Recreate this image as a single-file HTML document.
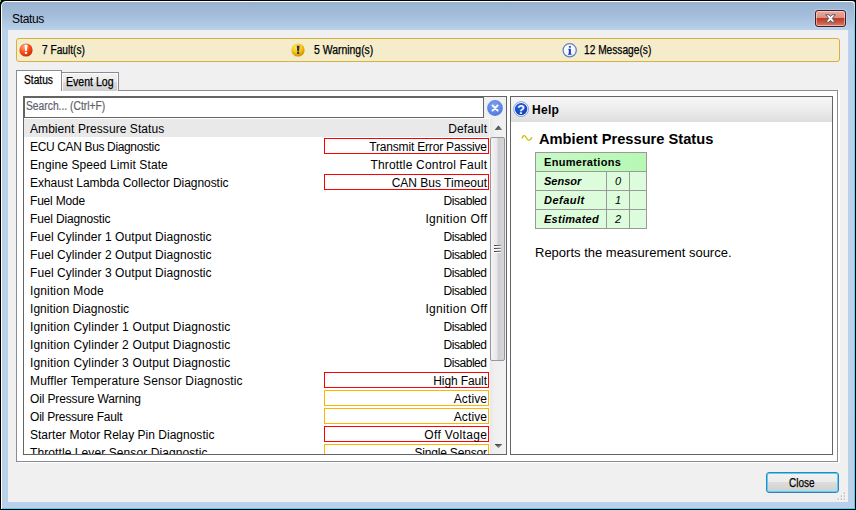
<!DOCTYPE html>
<html><head><meta charset="utf-8">
<style>
*{box-sizing:border-box;margin:0;padding:0}
html,body{width:856px;height:510px;overflow:hidden;background:#000}
body{font-family:"Liberation Sans",sans-serif;font-size:12px;color:#000;position:relative}
.abs{position:absolute}
#frame{left:0;top:0;width:856px;height:510px;background:#000}
#frameW{left:1px;top:1px;width:854px;height:508px;background:#fff;border-radius:5px 3px 0 0}
#frameB{left:2px;top:2px;width:852px;height:506px;border-radius:4px 3px 0 0;
 background:linear-gradient(#98b3d0 0px,#a4bedb 14px,#b9d1ea 28px,#b9d1ea 100%)}
#cyR{left:854px;top:3px;width:1px;height:506px;background:linear-gradient(#a8e6f8 0,#5dd8fa 25px,#3fd8f7 100%)}
#cyB{left:2px;top:508px;width:853px;height:1px;background:#3fd8f7}
#green{left:0;top:0;width:1px;height:2px;background:#30f030}
#content{left:8px;top:30px;width:840px;height:472px;background:#f0f0f0}
#title{left:12px;top:12px;font-size:12px;line-height:14px;color:#000;letter-spacing:-0.35px}
/* close X */
#xbtn{left:815px;top:10px;width:31px;height:17px;border:1px solid #4a1a22;border-radius:3px;
 background:linear-gradient(#e9aa9d 0,#dd8d7f 48%,#bf3c22 50%,#c95038 70%,#d67e6a 100%);box-shadow:inset 0 0 0 1px rgba(255,255,255,.45),0 0 0 1px rgba(190,220,245,.55)}
/* info bar */
#bar{left:16px;top:38px;width:824px;height:24px;background:#f4eccb;border:1px solid #d6b23c;border-radius:3px}
.bt{-webkit-text-stroke:0.25px #000;font-size:12px;line-height:14px;top:43px;white-space:pre;transform-origin:0 0}
/* tabs */
#page{left:16px;top:90px;width:822px;height:372px;background:#fff;border:1px solid #898c95;box-shadow:2px 1px 0 #fff}
#tab1{left:16px;top:70px;width:46px;height:21px;background:#fff;border:1px solid #898c95;border-bottom:none}
#tab2{left:61px;top:72px;width:58px;height:19px;border:1px solid #898c95;border-bottom:none;box-shadow:inset 1px 1px 0 rgba(255,255,255,.75),inset -1px 0 0 rgba(255,255,255,.75);background:linear-gradient(#f2f2f2 0,#ebebeb 50%,#dddddd 50%,#cfcfcf 100%)}
.tt{-webkit-text-stroke:0.25px #000;font-size:12px;line-height:14px;white-space:pre;transform-origin:0 0}
/* left panel */
#lp{left:23px;top:96px;width:484px;height:359px;border:1px solid #646464;background:#f0f0f0;overflow:hidden}
#search{left:24px;top:97px;width:460px;height:21px;border:1px solid #646464;background:#fff}
#stext{left:26px;top:99px;font-size:12px;line-height:14px;color:#62626e;-webkit-text-stroke:0.2px #62626e;white-space:pre;transform-origin:0 0;transform:scaleX(.858)}
#list{left:24px;top:118px;width:465px;height:336px;background:#fff;overflow:hidden}
.row{position:absolute;left:0;width:465px;height:18px}
.row .l{position:absolute;left:6px;top:3px;line-height:14px;white-space:pre}
.row .v{position:absolute;left:300px;top:1px;width:165px;height:16px;line-height:14px;padding-top:1px;text-align:right;padding-right:1px;white-space:pre;border:1px solid transparent}
.row .v b{font-weight:normal;display:inline-block}
.row .v.f{border-color:#f00}
.row .v.w{border-color:#ffb400}
.row.sel{background:#e9e9e9}
#sb{left:489px;top:119px;width:17px;height:335px;background:linear-gradient(90deg,#f8f8f8 0,#f8f8f8 1px,#e8e8e8 1px,#efefef 5px,#f2f2f2 100%)}
#thumb{left:490px;top:137px;width:15px;height:224px;border:1px solid #979797;border-radius:2px;background:linear-gradient(90deg,#f4f4f4 0,#e8e8ea 45%,#cfcfd3 55%,#d6d6da 100%)}
/* right panel */
#rp{left:510px;top:96px;width:323px;height:359px;border:1px solid #646464;background:#fff}
#hh{left:511px;top:97px;width:321px;height:25px;background:linear-gradient(#f7f7f7 0,#ececec 50%,#dedede 100%)}
#help{left:532px;top:103px;font-size:12px;font-weight:bold;line-height:14px;letter-spacing:0.3px}
#h1{left:539px;top:131px;font-size:14.67px;font-weight:bold;line-height:17px;white-space:pre}
#tbl{left:535px;top:152px;width:112px;height:77px;background:#9a9a9a}
.c{position:absolute;background:#dcfcdc;font-size:11px;font-weight:bold;line-height:13px;white-space:pre}
.c i{font-style:italic}
#desc{left:535px;top:245px;font-size:13px;line-height:15px;white-space:pre}
/* close button */
#close{left:766px;top:472px;width:73px;height:21px;border:1px solid #3c7fb1;border-radius:3px;
 background:linear-gradient(#f2f2f2 0,#ebebeb 48%,#dddddd 50%,#cfcfcf 100%);box-shadow:inset 0 0 0 1px #48d8fb;
 }
#closet{-webkit-text-stroke:0.25px #000;left:788.7px;top:476px;font-size:12px;line-height:14px;transform-origin:0 0;transform:scaleX(.831)}
</style></head><body>
<div class="abs" id="frame"></div>
<div class="abs" id="frameW"></div>
<div class="abs" id="frameB"></div>
<div class="abs" id="cyR"></div>
<div class="abs" id="cyB"></div>
<div class="abs" id="green"></div>
<div class="abs" id="title">Status</div>
<div class="abs" id="xbtn"></div>
<div class="abs" id="content"></div>
<div class="abs" id="bar"></div>
<div class="abs bt" style="left:42px;transform:scaleX(.846)">7 Fault(s)</div>
<div class="abs bt" style="left:314px;transform:scaleX(.869)">5 Warning(s)</div>
<div class="abs bt" style="left:584px;transform:scaleX(.848)">12 Message(s)</div>
<div class="abs" id="page"></div>
<div class="abs" id="tab2"></div>
<div class="abs" id="tab1"></div>
<div class="abs tt" style="left:24px;top:73px;transform:scaleX(.852)">Status</div>
<div class="abs tt" style="left:66px;top:75px;transform:scaleX(.879)">Event Log</div>
<div class="abs" id="lp"></div>
<div class="abs" id="search"></div>
<div class="abs" id="stext">Search... (Ctrl+F)</div>
<div class="abs" id="list">
<div class="row sel" style="top:1px"><span class="l" style="letter-spacing:0.067px">Ambient Pressure Status</span><span class="v"><b style="letter-spacing:0.111px;margin-right:-0.111px">Default</b></span></div>
<div class="row" style="top:19px"><span class="l" style="letter-spacing:-0.357px">ECU CAN Bus Diagnostic</span><span class="v f"><b style="letter-spacing:-0.185px;margin-right:0.185px">Transmit Error Passive</b></span></div>
<div class="row" style="top:37px"><span class="l" style="letter-spacing:0.103px">Engine Speed Limit State</span><span class="v"><b style="letter-spacing:0.185px;margin-right:-0.185px">Throttle Control Fault</b></span></div>
<div class="row" style="top:55px"><span class="l" style="letter-spacing:-0.047px">Exhaust Lambda Collector Diagnostic</span><span class="v f"><b style="letter-spacing:0.000px;margin-right:-0.000px">CAN Bus Timeout</b></span></div>
<div class="row" style="top:73px"><span class="l" style="letter-spacing:-0.200px">Fuel Mode</span><span class="v"><b style="letter-spacing:-0.458px;margin-right:0.458px">Disabled</b></span></div>
<div class="row" style="top:91px"><span class="l" style="letter-spacing:-0.158px">Fuel Diagnostic</span><span class="v"><b style="letter-spacing:0.343px;margin-right:-0.343px">Ignition Off</b></span></div>
<div class="row" style="top:109px"><span class="l" style="letter-spacing:0.068px">Fuel Cylinder 1 Output Diagnostic</span><span class="v"><b style="letter-spacing:-0.458px;margin-right:0.458px">Disabled</b></span></div>
<div class="row" style="top:127px"><span class="l" style="letter-spacing:0.068px">Fuel Cylinder 2 Output Diagnostic</span><span class="v"><b style="letter-spacing:-0.458px;margin-right:0.458px">Disabled</b></span></div>
<div class="row" style="top:145px"><span class="l" style="letter-spacing:0.068px">Fuel Cylinder 3 Output Diagnostic</span><span class="v"><b style="letter-spacing:-0.458px;margin-right:0.458px">Disabled</b></span></div>
<div class="row" style="top:163px"><span class="l" style="letter-spacing:0.138px">Ignition Mode</span><span class="v"><b style="letter-spacing:-0.458px;margin-right:0.458px">Disabled</b></span></div>
<div class="row" style="top:181px"><span class="l" style="letter-spacing:0.058px">Ignition Diagnostic</span><span class="v"><b style="letter-spacing:0.343px;margin-right:-0.343px">Ignition Off</b></span></div>
<div class="row" style="top:199px"><span class="l" style="letter-spacing:0.151px">Ignition Cylinder 1 Output Diagnostic</span><span class="v"><b style="letter-spacing:-0.458px;margin-right:0.458px">Disabled</b></span></div>
<div class="row" style="top:217px"><span class="l" style="letter-spacing:0.151px">Ignition Cylinder 2 Output Diagnostic</span><span class="v"><b style="letter-spacing:-0.458px;margin-right:0.458px">Disabled</b></span></div>
<div class="row" style="top:235px"><span class="l" style="letter-spacing:0.151px">Ignition Cylinder 3 Output Diagnostic</span><span class="v"><b style="letter-spacing:-0.458px;margin-right:0.458px">Disabled</b></span></div>
<div class="row" style="top:253px"><span class="l" style="letter-spacing:0.137px">Muffler Temperature Sensor Diagnostic</span><span class="v f"><b style="letter-spacing:-0.111px;margin-right:0.111px">High Fault</b></span></div>
<div class="row" style="top:271px"><span class="l" style="letter-spacing:-0.137px">Oil Pressure Warning</span><span class="v w"><b style="letter-spacing:0.122px;margin-right:-0.122px">Active</b></span></div>
<div class="row" style="top:289px"><span class="l" style="letter-spacing:-0.208px">Oil Pressure Fault</span><span class="v w"><b style="letter-spacing:0.122px;margin-right:-0.122px">Active</b></span></div>
<div class="row" style="top:307px"><span class="l" style="letter-spacing:0.010px">Starter Motor Relay Pin Diagnostic</span><span class="v f"><b style="letter-spacing:0.354px;margin-right:-0.354px">Off Voltage</b></span></div>
<div class="row" style="top:325px"><span class="l" style="letter-spacing:0.089px">Throttle Lever Sensor Diagnostic</span><span class="v w"><b style="letter-spacing:-0.177px;margin-right:0.177px">Single Sensor</b></span></div>
</div>
<div class="abs" id="sb"></div>
<div class="abs" id="thumb"></div>
<div class="abs" id="rp"></div>
<div class="abs" id="hh"></div>
<div class="abs" id="help">Help</div>
<div class="abs" id="h1">Ambient Pressure Status</div>
<div class="abs" id="tbl">
<div class="c" style="left:1px;top:1px;width:110px;height:18px;padding:3px 0 0 8px;background:linear-gradient(90deg,#c8f9c6,#b6f8b4);letter-spacing:0.32px">Enumerations</div>
<div class="c" style="left:1px;top:20px;width:70px;height:18px;padding:3px 0 0 8px"><i>Sensor</i></div>
<div class="c" style="left:72px;top:20px;width:22px;height:18px;padding:3px 0 0 8px;font-weight:normal"><i>0</i></div>
<div class="c" style="left:95px;top:20px;width:16px;height:18px"></div>
<div class="c" style="left:1px;top:39px;width:70px;height:18px;padding:3px 0 0 8px"><i style="letter-spacing:0.5px">Default</i></div>
<div class="c" style="left:72px;top:39px;width:22px;height:18px;padding:3px 0 0 8px;font-weight:normal"><i>1</i></div>
<div class="c" style="left:95px;top:39px;width:16px;height:18px"></div>
<div class="c" style="left:1px;top:58px;width:70px;height:18px;padding:3px 0 0 8px"><i style="letter-spacing:0.26px">Estimated</i></div>
<div class="c" style="left:72px;top:58px;width:22px;height:18px;padding:3px 0 0 8px;font-weight:normal"><i>2</i></div>
<div class="c" style="left:95px;top:58px;width:16px;height:18px"></div>
</div>
<div class="abs" id="desc">Reports the measurement source.</div>
<div class="abs" id="close"></div><div class="abs" id="closet">Close</div>

<svg class="abs" style="left:0;top:0" width="856" height="510" viewBox="0 0 856 510">
<defs>
<radialGradient id="gR" cx="0.36" cy="0.28" r="0.8"><stop offset="0" stop-color="#ffa886"/><stop offset="0.5" stop-color="#f9501c"/><stop offset="0.85" stop-color="#d63404"/><stop offset="1" stop-color="#a82810"/></radialGradient>
<radialGradient id="gY" cx="0.4" cy="0.3" r="0.75"><stop offset="0" stop-color="#ffe870"/><stop offset="0.5" stop-color="#f8c818"/><stop offset="1" stop-color="#c88a00"/></radialGradient>
<radialGradient id="gI" cx="0.4" cy="0.35" r="0.75"><stop offset="0" stop-color="#ffffff"/><stop offset="0.7" stop-color="#f4f6fc"/><stop offset="1" stop-color="#c8d4ec"/></radialGradient>
<radialGradient id="gB" cx="0.45" cy="0.35" r="0.7"><stop offset="0" stop-color="#7fa2ee"/><stop offset="1" stop-color="#4a78e0"/></radialGradient>
<radialGradient id="gQ" cx="0.4" cy="0.3" r="0.75"><stop offset="0" stop-color="#2c62dc"/><stop offset="1" stop-color="#0c3cb8"/></radialGradient>
</defs>
<!-- fault -->
<circle cx="26" cy="50" r="6.6" fill="url(#gR)"/>
<path d="M24.5 44.7h3.1l-0.7 6.3h-1.7z" fill="#fff"/><rect x="24.9" y="51.9" width="2.2" height="2" fill="#fff"/>
<!-- warning -->
<circle cx="298" cy="50" r="6.6" fill="url(#gY)"/>
<path d="M296.7 45.7h2.9l-0.6 5.7h-1.7z" fill="#2c3450"/><rect x="297" y="52.1" width="2.2" height="1.8" fill="#2c3450"/>
<!-- info -->
<circle cx="569.7" cy="50.3" r="6.6" fill="url(#gI)" stroke="#6482c0" stroke-width="1.25"/>
<rect x="568.9" y="46" width="2" height="1.7" fill="#2848c8"/>
<path d="M568.3 48.8h2.6v5h0.7v0.9h-3.6v-0.9h0.8v-4.1h-0.5z" fill="#2040c0"/>
<!-- clear -->
<circle cx="495" cy="108" r="7.9" fill="url(#gB)"/>
<path d="M492.5 105.4l5.2 5.2M497.7 105.4l-5.2 5.2" stroke="#fff" stroke-width="1.9" stroke-linecap="round"/>
<!-- help -->
<circle cx="521.1" cy="109.1" r="7.4" fill="#fff" stroke="#7496ea" stroke-width="0.9"/>
<circle cx="521.1" cy="109.1" r="6.2" fill="url(#gQ)"/>
<text x="521.1" y="113.6" font-family="Liberation Sans" font-weight="bold" font-size="12.5" fill="#fff" text-anchor="middle">?</text>
<!-- wave -->
<path d="M522 138.6C523 135 524.8 134.4 526.4 137.8S529.6 141.6 532 137.4" fill="none" stroke="#ccbe00" stroke-width="1.3"/>
<!-- X glyph -->
<path transform="translate(830.5,18.45)" d="M-4.8-3.7H-1.5L0-1.9L1.5-3.7H4.8L1.7 0L4.8 3.7H1.5L0 1.9L-1.5 3.7H-4.8L-1.7 0Z" fill="#fff" stroke="#465064" stroke-width="0.9" stroke-linejoin="round"/>
<!-- scroll arrows -->
<linearGradient id="gA" x1="0" y1="0" x2="1" y2="1"><stop offset="0" stop-color="#202020"/><stop offset="1" stop-color="#909090"/></linearGradient><path d="M494.6 129.9l3.9-4.5 3.9 4.5z" fill="url(#gA)"/>
<linearGradient id="gA2" x1="0" y1="0" x2="0.6" y2="1"><stop offset="0" stop-color="#282828"/><stop offset="1" stop-color="#a8a8a8"/></linearGradient><path d="M494.6 444h7.8l-3.9 4.3z" fill="url(#gA2)"/>
<!-- grip lines -->
<linearGradient id="gG" x1="0" y1="0" x2="1" y2="0"><stop offset="0" stop-color="#3c3c3c"/><stop offset="1" stop-color="#8c8c8c"/></linearGradient>
<g fill="url(#gG)"><rect x="494" y="245" width="7" height="1"/><rect x="494" y="248" width="7" height="1"/><rect x="494" y="251" width="7" height="1"/></g>
<g fill="#fff" opacity=".85"><rect x="494" y="246" width="7" height="1"/><rect x="494" y="249" width="7" height="1"/><rect x="494" y="252" width="7" height="1"/></g>
<!-- resize grip -->
<g fill="#fff" transform="translate(-0.3,-0.5)"><rect x="845" y="494" width="1" height="1"/><rect x="842" y="497" width="1" height="1"/><rect x="845" y="497" width="1" height="1"/><rect x="839" y="500" width="1" height="1"/><rect x="842" y="500" width="1" height="1"/><rect x="845" y="500" width="1" height="1"/></g>
<g fill="#b4b4b4" transform="translate(-0.3,-0.5)"><rect x="844" y="493" width="1.3" height="1.3"/><rect x="841" y="496" width="1.3" height="1.3"/><rect x="844" y="496" width="1.3" height="1.3"/><rect x="838" y="499" width="1.3" height="1.3"/><rect x="841" y="499" width="1.3" height="1.3"/><rect x="844" y="499" width="1.3" height="1.3"/></g>
</svg>
</body></html>
